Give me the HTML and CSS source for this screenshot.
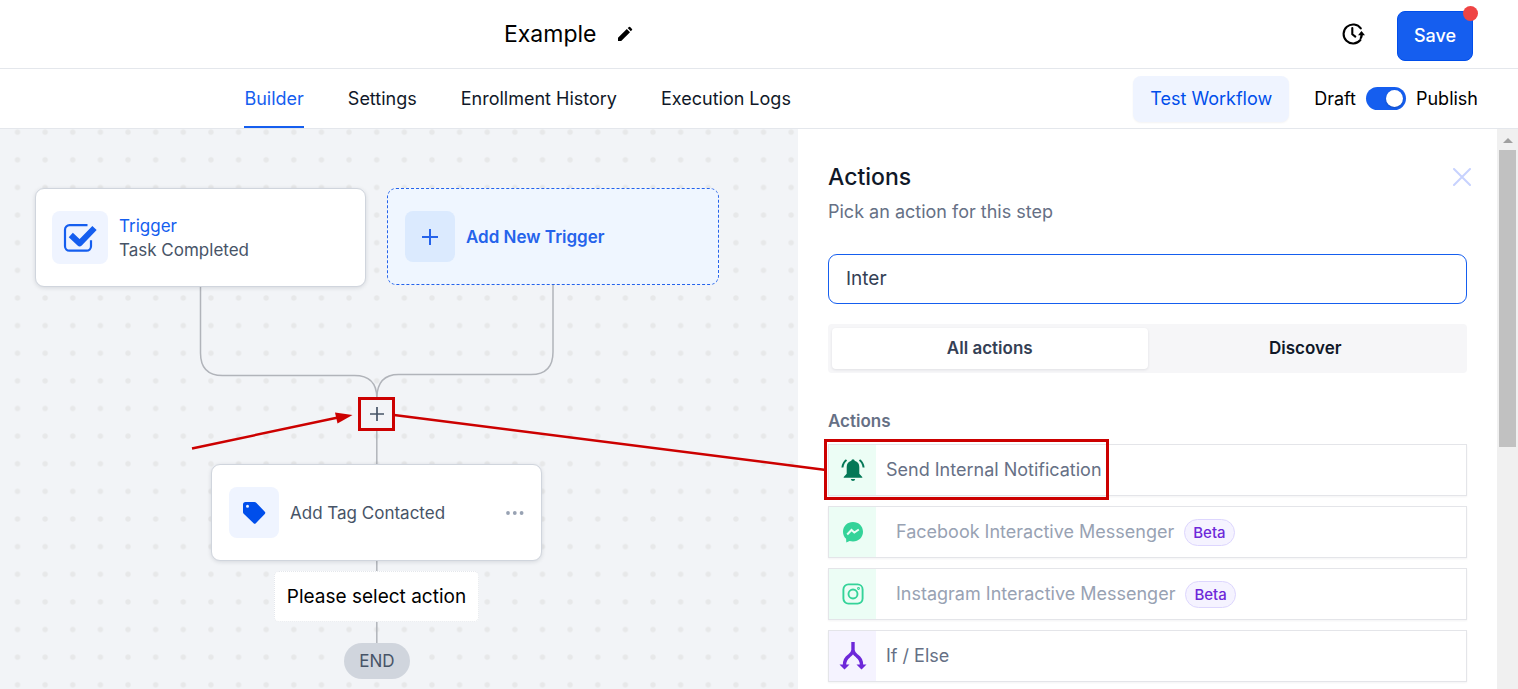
FILE: index.html
```html
<!DOCTYPE html>
<html lang="en">
<head>
<meta charset="utf-8">
<title>Workflow builder</title>
<link rel="stylesheet" href="styles.css">
</head>
<body>
<div class="app">
  <header class="topbar">
    <h1 class="title">Example</h1>
    <button class="icon-button" type="button" aria-label="Rename workflow">
      <svg class="icon-pencil" viewBox="0 0 16 16"><path d="M1 15v-3.2L9.8 3l3.2 3.2L4.200 15zM10.700 2.100 12 .9q.5-.5 1.100 0L15 2.900q.5.500 0 1.100l-1.200 1.300z"/></svg>
    </button>
    <div class="topbar-actions">
      <button class="icon-button" type="button" aria-label="Version history">
        <svg class="icon-history" viewBox="0 0 24 24"><path d="M19.800 6.400A9.500 9.500 0 1 0 19.400 18M11.300 6v6.200l3 2.400" fill="none" stroke="#000" stroke-width="2.100" stroke-linecap="round" stroke-linejoin="round"/><path d="M20.500 8.900 24 13.200h-2.200c-.2 2-.8 3-1.800 4.200l-1.500-1c.5-1 .8-2 .9-3.200H17z"/></svg>
      </button>
      <button class="save" type="button">Save<span class="save-dot"></span></button>
    </div>
  </header>
  <div class="navbar">
    <nav class="tabs">
      <a class="tab tab-active" href="#builder">Builder</a>
      <a class="tab" href="#settings">Settings</a>
      <a class="tab" href="#enrollment">Enrollment History</a>
      <a class="tab" href="#logs">Execution Logs</a>
    </nav>
    <button class="test" type="button">Test Workflow</button>
    <div class="publish">
      <span>Draft</span>
      <input class="switch" id="publish" type="checkbox" checked>
      <label for="publish">Publish</label>
    </div>
  </div>
  <main class="main">
    <section class="canvas">
      <svg class="canvas-art" aria-hidden="true">
        <defs><pattern id="dots" x="3.700" y="17" width="27.630" height="27.630" patternUnits="userSpaceOnUse"><circle cx="13.800" cy="13.800" r="2.700" fill="#e7e8e9"/></pattern></defs>
        <rect width="100%" height="100%" fill="url(#dots)"/>
        <g fill="none" stroke="#b1b4ba" stroke-width="1.500">
          <path d="M200.500 158v66q0 22.500 22 22.500h132q22 0 22.300 22"/>
          <path d="M553 156v67q0 22.500-22 22.500H398.500q-21 0-21.700 23V340"/>
          <path d="M376.800 430v90"/>
        </g>
      </svg>
      <div class="node node-trigger">
        <span class="tile tile-wide"><svg class="icon-check" viewBox="0 0 34 30"><path d="M24.500 2.200H6.500a4.500 4.500 0 0 0-4.500 4.500v16.500a4.500 4.500 0 0 0 4.500 4.500h17a4.500 4.500 0 0 0 4.500-4.500v-6" fill="none" stroke="#155eef" stroke-width="2.200"/><path d="m7.800 12 8.800 8.300L31.500 5" fill="none" stroke="#155eef" stroke-width="6" stroke-linejoin="round"/></svg></span>
        <div><div class="node-kind">Trigger</div><div class="node-name">Task Completed</div></div>
      </div>
      <button class="node node-add" type="button">
        <span class="tile tile-blue"><svg class="icon-plus" viewBox="0 0 18 18"><path d="M9 1v16M1 9h16" stroke="#2563eb" stroke-width="2"/></svg></span>
        Add New Trigger
      </button>
      <button class="insert" type="button" aria-label="Insert step"><svg class="icon-insert" viewBox="0 0 16 16"><path d="M8 1v14M1 8h14" stroke="#475467" stroke-width="1.700"/></svg></button>
      <div class="node node-tag">
        <span class="tile"><svg class="icon-tag" viewBox="0 0 24 24"><path fill-rule="evenodd" d="M3.500 1h9q1 0 1.700.7l8.600 9q1 1.100 0 2.200l-9 9.300q-1.100 1-2.200 0L1.700 12.700Q1 12 1 11V3.500Q1 1 3.500 1zM5.500 3.800a1.500 1.500 0 1 0 0 3 1.500 1.500 0 0 0 0-3z" fill="#004eeb"/></svg></span>
        <span class="node-name">Add Tag Contacted</span>
        <button class="icon-button more" type="button" aria-label="Step options"><svg class="icon-more" viewBox="0 0 18 4"><circle cx="2" cy="2" r="1.900"/><circle cx="8.800" cy="2" r="1.900"/><circle cx="15.600" cy="2" r="1.900"/></svg></button>
      </div>
      <div class="select-step">Please select action</div>
      <div class="end">END</div>
    </section>
    <aside class="panel">
      <div class="panel-body">
        <div class="panel-head">
          <h2 class="panel-title">Actions</h2>
          <button class="icon-button" type="button" aria-label="Close"><svg class="icon-close" viewBox="0 0 18 18"><path d="m1 1 16 16M17 1 1 17" stroke="#c7d2fe" stroke-width="2" stroke-linecap="round"/></svg></button>
        </div>
        <p class="panel-sub">Pick an action for this step</p>
        <input class="search" type="text" value="Inter" aria-label="Search actions">
        <div class="segments">
          <button class="segment segment-on" type="button">All actions</button>
          <button class="segment" type="button">Discover</button>
        </div>
        <h3 class="group">Actions</h3>
        <div class="list">
          <button class="row" type="button">
            <span class="row-icon"><svg class="icon-row" viewBox="0 0 24 24" fill="#047857"><path d="M12 1.200q1.500 0 1.700 1.500 4.600 1.300 4.600 6.300v6.700l3 3.300v.8H2.700V19l3-3.300V9q0-5 4.600-6.300Q10.500 1.200 12 1.200zM9.800 21h4.400q-.3 2-2.200 2t-2.200-2z"/><path d="M5.500 2Q2 4.500 1.400 9.500M18.500 2Q22 4.500 22.600 9.500" fill="none" stroke="#047857" stroke-width="2"/></svg></span>
            <span class="row-name">Send Internal Notification</span>
          </button>
          <button class="row row-muted" type="button">
            <span class="row-icon"><svg class="icon-row" viewBox="0 0 24 24"><path d="M12 2C6.300 2 2 6.200 2 11.700c0 2.900 1.200 5.400 3.100 7.100l.2 3.600 3.300-1.400c1 .3 2.200.4 3.400.4 5.700 0 10-4.200 10-9.700S17.700 2 12 2z" fill="#34d399"/><path d="m6.200 14.500 4.300-4.500 2.800 2.500 4.500-3" fill="none" stroke="#ecfdf5" stroke-width="2"/></svg></span>
            <span class="row-name">Facebook Interactive Messenger</span><span class="beta">Beta</span>
          </button>
          <button class="row row-muted" type="button">
            <span class="row-icon"><svg class="icon-row" viewBox="0 0 24 24" fill="none" stroke="#34d399" stroke-width="1.900"><rect x="2.400" y="2.400" width="19.200" height="19.200" rx="5"/><circle cx="12" cy="12" r="4.500"/><circle cx="17.500" cy="6.500" r=".5"/></svg></span>
            <span class="row-name">Instagram Interactive Messenger</span><span class="beta">Beta</span>
          </button>
          <button class="row row-purple" type="button">
            <span class="row-icon"><svg class="icon-branch" viewBox="0 0 28 28"><path d="M14 0v8q0 3-4 6-4.500 3-4.500 9M14 8q0 3 4 6 4.500 3 4.500 9" fill="none" stroke="#6d28d9" stroke-width="3.400"/><path d="M.5 22.500h10l-5 5zM17.500 22.500h10l-5 5z" fill="#6d28d9"/></svg></span>
            <span class="row-name">If / Else</span>
          </button>
        </div>
      </div>
      <div class="scrollbar" aria-hidden="true"><span class="scroll-up"></span><span class="scroll-thumb"></span></div>
    </aside>
    <svg class="notes" aria-hidden="true">
      <g fill="none" stroke="#c00" stroke-width="2.500"><path d="M192 319.500 338 288.500M394 286l432 55"/></g>
      <path d="M352.500 286 335 283.500l2.500 11z" fill="#c00"/>
      <rect x="825.500" y="311.500" width="282" height="58" fill="none" stroke="#c00" stroke-width="3"/>
    </svg>
  </main>
</div>
</body>
</html>
```
FILE: styles.css
```css
* { box-sizing: border-box; }
body { margin: 0; font-family: Inter, "Liberation Sans", sans-serif; color: #101828; background: #fff; }
button, input { font: inherit; color: inherit; }
button { cursor: pointer; }
h1, h2, h3, p { margin: 0; }
svg { display: block; }
.app { display: flex; flex-direction: column; height: 100vh; overflow: hidden; }

.topbar { display: flex; align-items: center; flex: none; padding: 0 45px 0 33.2%; height: 69px; border-bottom: 1px solid #e4e7ec; }
.title { font-size: 23px; font-weight: 400; line-height: 28px; color: #000; }
.icon-button { padding: 0; border: 0; background: none; }
.icon-pencil { width: 16px; height: 16px; margin-left: 21px; }
.topbar-actions { display: flex; align-items: center; gap: 32px; margin-left: auto; }
.icon-history { width: 24px; height: 24px; }
.save { position: relative; width: 76px; height: 50px; margin-top: 4px; padding: 0 0 2px; border: 1px solid #004eeb; border-radius: 8px; background: #155eef; color: #fff; font-size: 18px; font-weight: 500; }
.save-dot { position: absolute; top: -6px; right: -6px; width: 15px; height: 15px; border-radius: 50%; background: #ef4444; }

.navbar { display: flex; align-items: center; flex: none; height: 60px; padding: 0 40px 0 16.1%; border-bottom: 1px solid #e4e7ec; font-size: 18px; line-height: 24px; }
.tabs { display: flex; align-self: stretch; gap: 44px; }
.tab { display: flex; align-items: center; padding-top: 2px; border-bottom: 2px solid transparent; color: #101828; text-decoration: none; white-space: nowrap; }
.tab-active { color: #155eef; border-color: #155eef; }
.test { height: 46px; margin-left: auto; padding: 0 17px; border: 0; border-radius: 8px; background: #eff4ff; box-shadow: 0 1px 2px #1018280d; color: #004eeb; }
.publish { display: flex; align-items: center; gap: 10px; margin-left: 25px; color: #000; }
.switch { appearance: none; width: 40px; height: 23px; margin: 0; padding: 3px; border-radius: 12px; background: #155eef; }
.switch::before { content: ""; display: block; width: 17px; height: 17px; margin-left: 17px; border-radius: 50%; background: #fff; box-shadow: 0 1px 2px #10182840; }

.main { position: relative; display: flex; flex: 1; min-height: 0; overflow: hidden; }
.canvas { position: relative; flex: 1; min-width: 0; overflow: hidden; background: #f2f4f7; }
.canvas-art, .notes { position: absolute; top: 0; left: 0; width: 100%; height: 100%; }
.notes { pointer-events: none; }
.node { position: absolute; display: flex; align-items: center; gap: 11px; width: 331px; height: 97px; padding: 0 17px; border: 1px solid #d0d5dd; border-radius: 9px; background: #fff; box-shadow: 0 1px 4px #10182820; font-size: 17px; line-height: 24px; }
.node-trigger { top: 59px; left: 35px; height: 99px; padding: 0 16px; }
.node-add { top: 59px; left: 387px; width: 332px; border: 1px dashed #2563eb; background: #eff6ff; box-shadow: none; color: #2563eb; font-weight: 600; }
.node-tag { top: 335px; left: 211px; }
.node-kind { color: #155eef; }
.node-name { color: #475467; }
.tile { display: flex; align-items: center; justify-content: center; flex: none; width: 50px; height: 51px; border-radius: 8px; background: #eff4ff; }
.tile-wide { width: 56px; height: 53px; }
.tile-blue { background: #dbeafe; }
.icon-check { width: 34px; height: 30px; }
.icon-plus { width: 18px; height: 18px; }
.icon-tag { width: 24px; height: 24px; }
.more { margin-left: auto; }
.icon-more { width: 18px; height: 4px; fill: #98a2b3; }
.insert { position: absolute; top: 268px; left: 358px; display: flex; align-items: center; justify-content: center; width: 37px; height: 34px; padding: 0; border: 3px solid #c00; background: #f2f4f7; }
.icon-insert { width: 16px; height: 16px; }
.select-step { position: absolute; top: 442px; left: 274px; width: 205px; padding: 12px 0; border: 1px dotted #e4e7ec; border-radius: 5px; background: #fff; color: #000; font-size: 19px; line-height: 25px; text-align: center; white-space: nowrap; }
.end { position: absolute; top: 514px; left: 344px; width: 66px; padding: 6px 0; border-radius: 18px; background: #d0d5dd; color: #475467; font-size: 17px; line-height: 24px; text-align: center; }

.panel { display: flex; flex: none; width: 720px; background: #fff; }
.panel-body { flex: 1; padding: 32px 30px 0; }
.panel-head { display: flex; align-items: center; justify-content: space-between; padding-right: 4px; margin-right: -8px; }
.panel-title { font-size: 23px; font-weight: 500; line-height: 32px; }
.icon-close { width: 18px; height: 18px; }
.panel-sub { margin-top: 6px; color: #667085; font-size: 18px; line-height: 26px; }
.search { display: block; width: 100%; height: 50px; margin-top: 29px; padding: 0 17px 2px; border: 1px solid #155eef; border-radius: 9px; outline: 0; background: #fff; color: #344054; font-size: 19px; }
.segments { display: flex; margin-top: 20px; padding: 4px; border-radius: 4px; background: #f6f6f8; }
.segment { flex: 1; height: 41px; padding: 0 0 2px; border: 0; border-radius: 4px; background: none; color: #101828; font-size: 17px; font-weight: 600; }
.segment-on { background: #fff; box-shadow: 0 1px 3px #10182818; color: #344054; }
.group { margin-top: 36px; color: #667085; font-size: 17px; font-weight: 600; line-height: 24px; }
.list { display: grid; gap: 10px; margin-top: 11px; }
.row { display: flex; align-items: center; width: 100%; height: 52px; padding: 0; border: 1px solid #e4e5e9; background: #fff; box-shadow: 0 1px 2px #1018280d; color: #667085; font-size: 18px; text-align: left; }
.row-name { padding-bottom: 2px; }
.row-icon { display: flex; align-items: center; justify-content: center; align-self: stretch; width: 47px; margin-right: 10px; background: #ecfdf5; }
.row-muted { color: #98a2b3; }
.row-muted .row-icon { margin-right: 20px; }
.row-purple .row-icon { background: #f5f3ff; }
.icon-row { width: 24px; height: 24px; }
.icon-branch { width: 28px; height: 28px; }
.beta { margin-left: 10px; padding: 0 8px; border: 1px solid #ddd6fe; border-radius: 14px; background: #f5f3ff; color: #6d28d9; font-size: 15px; font-weight: 500; line-height: 25px; }
.scrollbar { display: flex; flex-direction: column; align-items: center; width: 21px; padding-top: 9px; background: #f0f0f0; }
.scroll-up { border: 5px solid transparent; border-top: 0; border-bottom-color: #a0a0a0; }
.scroll-thumb { width: 17px; height: 297px; margin-top: 7px; background: #c1c1c1; }
```
